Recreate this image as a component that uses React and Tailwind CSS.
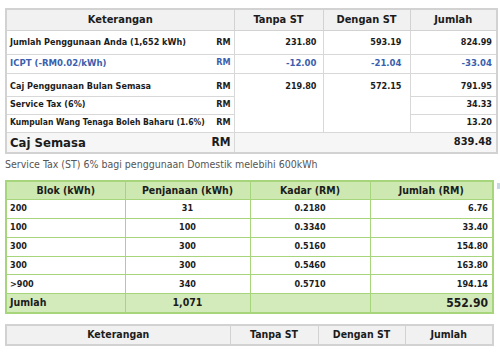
export default function App() {
    const blok = [
        { blok: "200", jana: "31", kadar: "0.2180", jumlah: "6.76" },
        { blok: "100", jana: "100", kadar: "0.3340", jumlah: "33.40" },
        { blok: "300", jana: "300", kadar: "0.5160", jumlah: "154.80" },
        { blok: "300", jana: "300", kadar: "0.5460", jumlah: "163.80" },
        { blok: ">900", jana: "340", kadar: "0.5710", jumlah: "194.14" },
    ];

    const font = { fontFamily: '"DejaVu Sans", Verdana, sans-serif', fontStretch: "condensed" };

    return (
        <div className="w-[500px] h-[353px] bg-white overflow-hidden text-[#1c1c1c]" style={font}>
            {/* bil elektrik */}
            <table className="ml-[5px] mt-[8px] w-[491px] border-collapse border-2 border-[#d2d2d2] text-[9px] font-bold table-fixed">
                <colgroup>
                    <col className="w-[228px]" />
                    <col className="w-[89px]" />
                    <col className="w-[87px]" />
                    <col className="w-[87px]" />
                </colgroup>
                <thead>
                    <tr className="h-[21px] bg-[#f1f1f1] text-[11px]">
                        <th className="border border-[#d2d2d2]">Keterangan</th>
                        <th className="border border-[#d2d2d2]">Tanpa ST</th>
                        <th className="border border-[#d2d2d2]">Dengan ST</th>
                        <th className="border border-[#d2d2d2]">Jumlah</th>
                    </tr>
                </thead>
                <tbody>
                    <tr className="h-[24px]">
                        <td className="border border-[#d8d8d8] px-[3px] pt-[2px]">
                            <div className="flex justify-between">
                                <span>Jumlah Penggunaan Anda (1,652 kWh)</span>
                                <span>RM</span>
                            </div>
                        </td>
                        <td className="border border-[#d8d8d8] text-right pr-[6px] pt-[2px]">231.80</td>
                        <td className="border border-[#d8d8d8] text-right pr-[8px] pt-[2px]">593.19</td>
                        <td className="border border-[#d8d8d8] text-right pr-[4px] pt-[2px]">824.99</td>
                    </tr>
                    <tr className="h-[19px] text-[#3b5fae] text-[9.5px]">
                        <td className="border border-[#d8d8d8] px-[3px]">
                            <div className="flex justify-between">
                                <span>ICPT (-RM0.02/kWh)</span>
                                <span className="text-[9px]">RM</span>
                            </div>
                        </td>
                        <td className="border border-[#d8d8d8] text-right pr-[6px]">-12.00</td>
                        <td className="border border-[#d8d8d8] text-right pr-[8px]">-21.04</td>
                        <td className="border border-[#d8d8d8] text-right pr-[4px]">-33.04</td>
                    </tr>
                    <tr className="h-[23px]">
                        <td className="border border-[#d8d8d8] px-[3px] pt-[4px]">
                            <div className="flex justify-between">
                                <span>Caj Penggunaan Bulan Semasa</span>
                                <span>RM</span>
                            </div>
                        </td>
                        <td rowSpan={3} className="border border-[#d8d8d8] text-right pr-[6px] align-top pt-[6px]">219.80</td>
                        <td rowSpan={3} className="border border-[#d8d8d8] text-right pr-[8px] align-top pt-[6px]">572.15</td>
                        <td className="border border-[#d8d8d8] text-right pr-[4px] pt-[4px]">791.95</td>
                    </tr>
                    <tr className="h-[18px]">
                        <td className="border border-[#d8d8d8] px-[3px]">
                            <div className="flex justify-between">
                                <span>Service Tax (6%)</span>
                                <span>RM</span>
                            </div>
                        </td>
                        <td className="border border-[#d8d8d8] text-right pr-[4px]">34.33</td>
                    </tr>
                    <tr className="h-[18px]">
                        <td className="border border-[#d8d8d8] px-[3px]">
                            <div className="flex justify-between">
                                <span className="text-[8.5px]">Kumpulan Wang Tenaga Boleh Baharu (1.6%)</span>
                                <span>RM</span>
                            </div>
                        </td>
                        <td className="border border-[#d8d8d8] text-right pr-[4px]">13.20</td>
                    </tr>
                    <tr className="h-[21px] bg-[#f6f6f6]">
                        <td className="border border-[#d8d8d8] px-[3px]">
                            <div className="flex justify-between items-center">
                                <span className="text-[13px]">Caj Semasa</span>
                                <span className="text-[12px]">RM</span>
                            </div>
                        </td>
                        <td colSpan={3} className="border border-[#d8d8d8] text-right pr-[4px] text-[11px]">839.48</td>
                    </tr>
                </tbody>
            </table>

            <p className="ml-[5px] mt-[3px] text-[10.5px] text-[#555]">
                Service Tax (ST) 6% bagi penggunaan Domestik melebihi 600kWh
            </p>

            {/* blok penjanaan */}
            <div className="flex items-start mt-[7px]">
                <table className="ml-[5px] w-[487px] border-collapse border-2 border-[#a6d57c] text-[9px] font-bold table-fixed">
                    <colgroup>
                        <col className="w-[119px]" />
                        <col className="w-[125px]" />
                        <col className="w-[120px]" />
                        <col className="w-[123px]" />
                    </colgroup>
                    <thead>
                        <tr className="h-[19px] bg-[#cde8b0] text-[10.5px]">
                            <th className="border border-[#a6d57c]">Blok (kWh)</th>
                            <th className="border border-[#a6d57c]">Penjanaan (kWh)</th>
                            <th className="border border-[#a6d57c]">Kadar (RM)</th>
                            <th className="border border-[#a6d57c]">Jumlah (RM)</th>
                        </tr>
                    </thead>
                    <tbody>
                        {blok.map((b, i) => (
                            <tr key={i} className="h-[18.8px]">
                                <td className="border border-[#a6d57c] px-[3px]">{b.blok}</td>
                                <td className="border border-[#a6d57c] text-center">{b.jana}</td>
                                <td className="border border-[#a6d57c] text-center">{b.kadar}</td>
                                <td className="border border-[#a6d57c] text-right pr-[4px]">{b.jumlah}</td>
                            </tr>
                        ))}
                        <tr className="h-[19px] bg-[#d3ebbb] text-[10.5px]">
                            <td className="border border-[#a6d57c] px-[3px]">Jumlah</td>
                            <td className="border border-[#a6d57c] text-center">1,071</td>
                            <td className="border border-[#a6d57c]"></td>
                            <td className="border border-[#a6d57c] text-right pr-[4px] text-[12px]">552.90</td>
                        </tr>
                    </tbody>
                </table>
                <div className="ml-[3px] mt-[3px] w-[3px] h-[6px] bg-[#c9d6e6]" />
            </div>

            {/* jadual bawah */}
            <table className="ml-[5px] mt-[10px] w-[487px] border-collapse border-2 border-[#d2d2d2] text-[10.5px] font-bold table-fixed">
                <colgroup>
                    <col className="w-[224px]" />
                    <col className="w-[88px]" />
                    <col className="w-[87px]" />
                    <col className="w-[88px]" />
                </colgroup>
                <thead>
                    <tr className="h-[20px] bg-[#f1f1f1]">
                        <th className="border border-[#d2d2d2]">Keterangan</th>
                        <th className="border border-[#d2d2d2]">Tanpa ST</th>
                        <th className="border border-[#d2d2d2]">Dengan ST</th>
                        <th className="border border-[#d2d2d2]">Jumlah</th>
                    </tr>
                </thead>
            </table>
        </div>
    );
}
